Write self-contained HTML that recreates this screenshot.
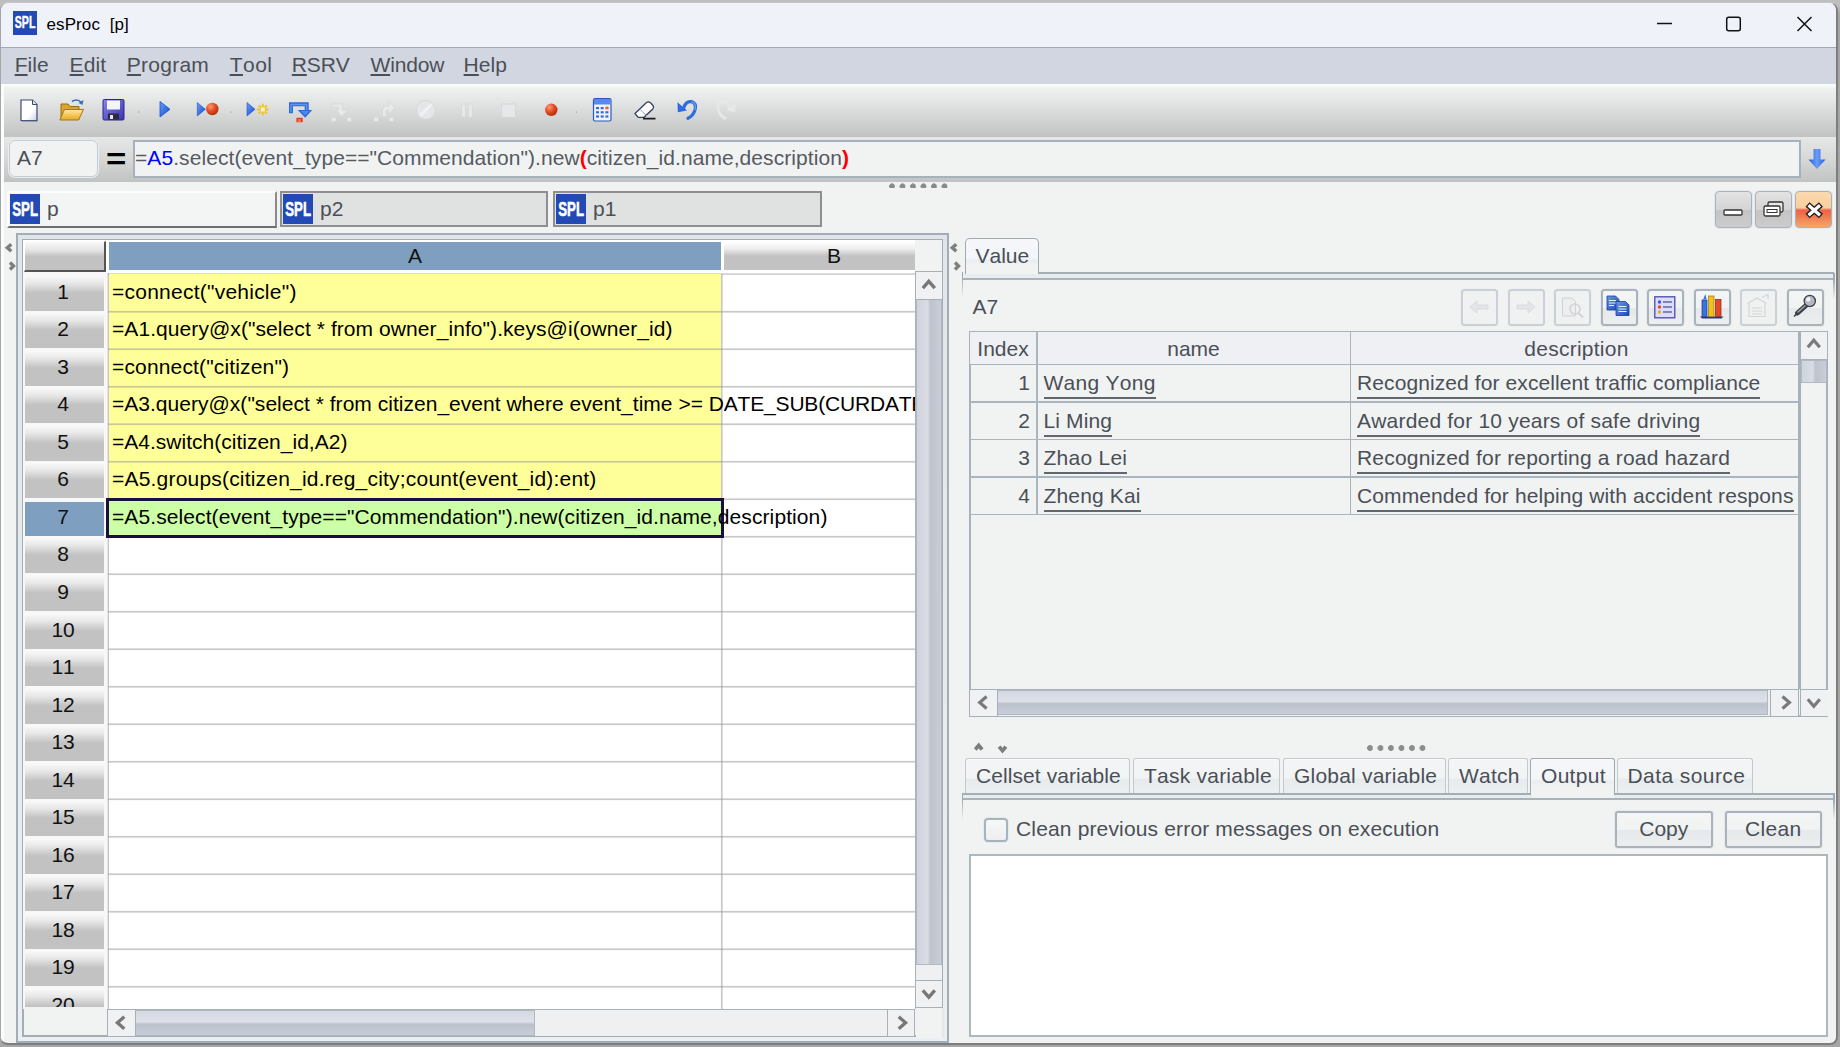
<!DOCTYPE html>
<html><head><meta charset="utf-8"><title>esProc [p]</title>
<style>
*{box-sizing:border-box;margin:0;padding:0}
html,body{width:1840px;height:1047px;overflow:hidden;background:#a9a9a9}
body{font-kerning:none;font-variant-ligatures:none;font-family:"Liberation Sans",sans-serif;font-size:21px;color:#4a4f57;position:relative}
.abs{position:absolute}
#desk{position:absolute;left:0;top:0;width:1840px;height:1047px;background:linear-gradient(#bebebe 0,#bebebe 6px,#a6a6a6 14px,#a6a6a6 100%)}
#win{position:absolute;left:0;top:2px;width:1838px;height:1043px;border-radius:9px 9px 8px 8px;background:#f1f3f2;border:1px solid #a6a6a6;border-top-color:#c4c6ca;border-right:2px solid #7e7e7e;border-bottom:2px solid #7e7e7e;overflow:hidden}
#win>*{position:absolute}
/* coordinates inside #win are offset by (1,3) from page => use #in wrapper */
#in{left:-1px;top:-3px;width:1840px;height:1047px}
#in>*{position:absolute}
#title{left:1px;top:3px;width:1836px;height:44px;background:#eff2f8}
#title .ico{position:absolute;left:12px;top:8px}
#title .txt{position:absolute;left:45.5px;top:12px;font-size:17px;color:#000;white-space:pre;letter-spacing:0.1px}
#menusep{left:1px;top:47px;width:1836px;height:1px;background:#a3a7b0}
#menu{left:1px;top:48px;width:1836px;height:36px;background:#d2d6e0}
#menu span{position:absolute;top:5px;font-size:21px;line-height:24px;color:#4b5058;white-space:pre}
#menu u{text-decoration:underline;text-decoration-thickness:1.5px;text-underline-offset:2px}
#tbwhite{left:1px;top:84px;width:1836px;height:2px;background:#fbfcfd}
#tb1{left:4px;top:85px;width:1832px;height:52px;background:linear-gradient(#fcfdfd 0%,#f1f3f2 5%,#c1c2c2 100%)}
#tb2{left:4px;top:137px;width:1832px;height:45px;background:linear-gradient(#e6e7e7 0%,#d6d7d7 50%,#c1c2c2 100%)}

.t{white-space:pre}
.dtab{background:#e0e1e1;border:2px solid #8f8f8f}
.dtab.sel{background:#f3f5f4;border:none;border-top:2px solid #fdfdfd;border-left:2px solid #fdfdfd;border-right:2px solid #8a8a8a;border-bottom:2px solid #6e6e6e}
.mdib{width:37px;height:37px;border:1.5px solid #aab2ba;border-radius:4px;background:linear-gradient(#e3e3e3,#d4d4d4 50%,#c4c4c4 51%,#cccccc);box-shadow:0 0 0 1px #e4e8ec}
.mdib.cl{background:linear-gradient(#fbd9ae 0%,#f9cf9e 45%,#f0604a 52%,#f07a50 70%,#f3a868 100%)}

#gp{border:2px solid #a2adb5;background:linear-gradient(#e1e5e9,#eceff1)}
#gpi{position:absolute;left:4px;top:4px;right:4px;bottom:4px;border:2px solid #a2adb5;background:#f1f3f2}
#gv>*{position:absolute}
.corner{background:linear-gradient(#f8f8f8 0%,#e4e4e4 30%,#c2c2c2 52%,#c2c2c2 100%);border-right:2px solid #555;border-bottom:2px solid #555;border-top:1px solid #fff;border-left:1px solid #fff}
.colA{background:#7f9fc0;text-align:center;color:#111;font-size:21px;line-height:28px}
.colB{background:linear-gradient(#ffffff 0%,#ececec 25%,#c2c2c2 50%,#c2c2c2 100%);text-align:center;color:#111;font-size:21px;line-height:28px}
.rhbg{background:#f8f8f8}
.rh{background:linear-gradient(#f6f6f6 0%,#e8e8e8 18%,#c2c2c2 47%,#c2c2c2 100%);text-align:center;color:#111;font-size:21px;line-height:30px;padding-right:3px}
.rh.sel{background:#7f9fc0}
.cy{background:#ffff99}
.cg{background:#ccffa6}
.hline{height:1.5px;background:#c6c6c6}
.vline{width:1.5px;background:#c6c6c6}
.csel{border:3.8px solid #1c0f3e}
.ct{color:#000;font-size:21px;line-height:24px;white-space:pre}
.sbv{background:#eef0f1;border-left:1px solid #a8b2ba}
.sbh{background:#eef0f1;border-top:1px solid #a8b2ba}
.sbthumbv{background:linear-gradient(90deg,#cfd3dc 0%,#d9dce4 45%,#bec3cd 55%,#c9cdd6 100%);border:1px solid #b0b8c4}
.sbthumbh{background:linear-gradient(#d4d8e1 0%,#dde0e7 45%,#bcc2cd 55%,#c8cdd7 100%);border:1px solid #b0b8c4}
.sbbtn{background:#eff1f2;border:1.5px solid #a6b0b9}
.sbgap{background:#f1f3f2}

.vtab{border:1.5px solid #9fabb3;border-bottom:none;border-radius:5px 5px 0 0;background:linear-gradient(#f6f7fb 0%,#f3f5f8 55%,#e9edf1 62%,#f1f3f2 75%,#f1f3f2 100%)}
.vbtn{width:37px;height:37px;border:2px solid #a9b3bb;border-radius:3.5px;background:linear-gradient(#f4f6f6 0%,#f1f3f3 50%,#e6e9eb 52%,#eceeef 100%);box-shadow:0 0 0 1px #e6eaed}
.vbtn.dis{border-color:#c9d0d6;background:#f0f2f2;box-shadow:0 0 0 1px #edf0f2}
#vt{border:2px solid #a8b2ba;background:#f1f3f2}
.thd{background:#eef0f4}
.tl{background:#abb5bd}
.th{text-align:center;font-size:21px;line-height:24px;white-space:pre}
.td{font-size:21px;line-height:24px;white-space:pre}
.td.r{text-align:right}
.ul{display:inline-block;border-bottom:2px solid #62676f;padding-bottom:2.4px;line-height:24px;height:28.4px}
.btab{border:1.5px solid #c2c9cf;border-bottom:none;border-radius:3px 3px 0 0;background:linear-gradient(#f4f5f6 0%,#f2f4f4 55%,#e8ebee 60%,#eceff0 100%);box-shadow:inset 0 1px 0 #fafbfb}
.btab.sel{border-color:#9fabb3;background:linear-gradient(#f6f7fa 0%,#f3f5f8 55%,#e9edf1 62%,#f1f3f2 75%,#f1f3f2 100%)}
.cb{width:24px;height:24px;border:2px solid #a9b3bb;border-radius:4px;background:linear-gradient(#f7f8f8,#eceeef);box-shadow:0 0 0 1px #e6eaed}
.pbtn{border:2px solid #a9b3bb;border-radius:3px;background:linear-gradient(#f4f6f6 0%,#f1f3f3 50%,#e6e9eb 52%,#eceeef 100%);box-shadow:0 0 0 1px #e6eaed;text-align:center;font-size:21px;line-height:32px}
#outbox{background:#fff;border:2px solid #adb7be}
</style></head><body>
<div id="desk"></div>
<div id="win"><div id="in">
<div id="title"><svg class="ico" width="24" height="24" viewBox="0 0 24 24"><rect width="24" height="24" fill="#2249b4"/><text x="12.1" y="17.4" font-family="Liberation Sans,sans-serif" font-weight="bold" font-size="16.5" fill="#fff" stroke="#fff" stroke-width="0.45" text-anchor="middle" textLength="20.6" lengthAdjust="spacingAndGlyphs">SPL</text></svg><span class="txt">esProc  [p]</span>
<svg class="wctl" style="position:absolute;left:1640px;top:0" width="196" height="44" viewBox="1641 3 196 44" fill="none" stroke="#111" stroke-width="1.5"><path d="M1657 23.500 H1672"/><rect x="1726.700" y="17.200" width="13.600" height="13.600" rx="2"/><path d="M1797.500 17 L1811.500 31 M1811.500 17 L1797.500 31"/></svg></div>
<div id="menusep"></div>
<div id="menu"><span id="m0" style="left:13.7px;letter-spacing:0.080px;"><u>F</u>ile</span><span id="m1" style="left:68.6px;letter-spacing:0.080px;"><u>E</u>dit</span><span id="m2" style="left:125.8px;letter-spacing:0.250px;"><u>P</u>rogram</span><span id="m3" style="left:228.7px;letter-spacing:0.500px;"><u>T</u>ool</span><span id="m4" style="left:290.8px;letter-spacing:-0.150px;"><u>R</u>SRV</span><span id="m5" style="left:369.5px;letter-spacing:-0.150px;"><u>W</u>indow</span><span id="m6" style="left:462.6px;letter-spacing:0.080px;"><u>H</u>elp</span></div>
<div id="tbwhite"></div>
<div id="tb1"></div>
<div id="tb2"></div>
<div style="left:1px;top:86px;width:3px;height:958px;background:#fbfcfc"></div>

<!-- toolbar icons -->
<svg id="tbicons" style="left:0;top:85px" width="800" height="52" viewBox="0 85 800 52">
<defs>
<linearGradient id="gBlue" x1="0" y1="0" x2="1" y2="1"><stop offset="0" stop-color="#6aa0ff"/><stop offset="1" stop-color="#1248c8"/></linearGradient>
<radialGradient id="gRed" cx="0.35" cy="0.3" r="0.8"><stop offset="0" stop-color="#ff9a70"/><stop offset="0.5" stop-color="#e04a22"/><stop offset="1" stop-color="#a82808"/></radialGradient>
<linearGradient id="gFold" x1="0" y1="0" x2="0" y2="1"><stop offset="0" stop-color="#ffe9a0"/><stop offset="1" stop-color="#e8a820"/></linearGradient>
<linearGradient id="gSave" x1="0" y1="0" x2="1" y2="1"><stop offset="0" stop-color="#8a86ee"/><stop offset="1" stop-color="#3a32b0"/></linearGradient>
<linearGradient id="gDoc" x1="0" y1="0" x2="1" y2="1"><stop offset="0" stop-color="#ffffff"/><stop offset="0.6" stop-color="#ffffff"/><stop offset="1" stop-color="#c8d0e4"/></linearGradient>
</defs>
<!-- new doc -->
<path d="M21 100 H32.5 L37 104.5 V120.5 H21 Z" fill="url(#gDoc)" stroke="#3c4a70" stroke-width="1.2"/>
<path d="M32.5 100 V104.5 H37" fill="#dfe4f0" stroke="#3c4a70" stroke-width="1"/>
<path d="M21.5 121.3 H37.5" stroke="#8890a8" stroke-width="1"/>
<!-- open folder -->
<path d="M61 104 H68 L70 106.5 H79 V119.5 H61 Z" fill="#d9a432" stroke="#9a6c10" stroke-width="1"/>
<path d="M64.5 109.5 H83.5 L78.5 120 H59.8 Z" fill="url(#gFold)" stroke="#a87818" stroke-width="1"/>
<path d="M72 101.5 Q77 98 81.5 102.5" fill="none" stroke="#3a6ac8" stroke-width="1.6"/>
<path d="M83.5 100 L82.5 105 L78.5 103 Z" fill="#3a6ac8"/>
<!-- save -->
<rect x="103" y="99.5" width="21" height="20.5" rx="1.2" fill="url(#gSave)" stroke="#2a2490" stroke-width="1"/>
<rect x="107" y="100.5" width="13" height="9" fill="#f4f4fa"/>
<rect x="108" y="113.5" width="11" height="6" fill="#2c2c38"/>
<rect x="110" y="115" width="3" height="4" fill="#e8e8f0"/>
<!-- sep -->
<rect x="138" y="111.5" width="1.2" height="1.2" fill="#a0a4a8"/>
<rect x="230.5" y="111.5" width="1.2" height="1.2" fill="#a0a4a8"/>
<rect x="575.8" y="111.5" width="1.2" height="1.2" fill="#a0a4a8"/>
<!-- run -->
<path d="M160 101.5 L170 109.3 L160 117 Z" fill="url(#gBlue)" stroke="#1a50c8" stroke-width="0.8"/>
<!-- debug -->
<path d="M197.3 102.5 L205.3 109.3 L197.3 116 Z" fill="url(#gBlue)" stroke="#1a50c8" stroke-width="0.6"/>
<circle cx="212.3" cy="109" r="6.2" fill="url(#gRed)"/>
<!-- run to cursor -->
<path d="M247 102.5 L255 109.3 L247 116 Z" fill="url(#gBlue)" stroke="#1a50c8" stroke-width="0.6"/>
<g stroke="#f0c020" stroke-width="1.8"><path d="M262.8 103.8 V115.2 M257 109.5 H268.5 M258.7 105.4 L266.9 113.6 M266.9 105.4 L258.7 113.6"/></g>
<rect x="260.8" y="107.5" width="4" height="4" fill="#fff8c0"/>
<!-- step over -->
<path d="M291 113.200 V104.300 H306.700 V110.500" fill="none" stroke="#2b6ad8" stroke-width="4"/>
<path d="M291 112.500 V104.500 H306.600 V110.500" fill="none" stroke="#5c98f2" stroke-width="1.4"/>
<path d="M297.800 110 H312.200 L305.200 117.800 Z" fill="#2b6ad8"/>
<path d="M301 111 H309.500 L305.200 115.500 Z" fill="#4a88ec"/>
<rect x="296.400" y="117.800" width="6.300" height="4.400" fill="#e63a1c"/>
<rect x="297.800" y="119" width="3.200" height="3.200" fill="#f87050"/>
<!-- disabled step into -->
<g fill="#e6e8e9" stroke="#d3d5d6" stroke-width="0.7"><path d="M331.500 104 H342.700 V110 H348 L342 116.500 L335.500 110 H338.500 V107.200 H331.500 Z"/><rect x="331.500" y="117.200" width="4.500" height="4.200"/><rect x="347" y="117.200" width="4.500" height="4.200"/></g>
<!-- disabled step out -->
<g fill="#e6e8e9" stroke="#d3d5d6" stroke-width="0.7"><path d="M382.500 116.500 V110 Q382.500 106 386.500 106 H388.500 V101.500 L395.500 107.800 L388.500 114 V109.800 H387 Q386.200 109.800 386.200 111 V116.500 Z"/><rect x="373.800" y="117.200" width="4.500" height="4.200"/><rect x="389.300" y="117.200" width="4.500" height="4.200"/></g>
<!-- disabled stop circle -->
<circle cx="425.800" cy="110" r="9.500" fill="#e4e6e7" stroke="#d3d5d6" stroke-width="0.9"/>
<path d="M421 115 L430.500 105" stroke="#f0f1f2" stroke-width="2.800" stroke-linecap="round"/>
<!-- pause -->
<g fill="#e6e8e9" stroke="#d3d5d6" stroke-width="0.7"><rect x="461.700" y="104" width="3.800" height="13"/><rect x="468.400" y="104" width="3.800" height="13"/></g>
<!-- stop -->
<rect x="501.700" y="104" width="13.800" height="13.300" fill="#e5e7e8" stroke="#d3d5d6" stroke-width="0.8"/>
<!-- red ball -->
<circle cx="551.3" cy="109.8" r="6.2" fill="url(#gRed)"/>
<!-- calculator -->
<rect x="593.5" y="98.5" width="17.5" height="22.5" rx="1.5" fill="#eef3fc" stroke="#2a58c0" stroke-width="1.2"/>
<rect x="594" y="99" width="16.5" height="5.5" fill="#5a8ae8"/>
<g fill="#3a6ad8"><rect x="596" y="107" width="3" height="2.2"/><rect x="600.7" y="107" width="3" height="2.2"/><rect x="596" y="111.2" width="3" height="2.2"/><rect x="600.7" y="111.2" width="3" height="2.2"/><rect x="605.4" y="111.2" width="3" height="2.2"/><rect x="596" y="115.4" width="3" height="2.2"/><rect x="600.7" y="115.4" width="3" height="2.2"/><rect x="605.4" y="115.4" width="3" height="2.2"/></g>
<rect x="605.4" y="106.6" width="3.2" height="2.8" fill="#f06030"/>
<!-- eraser -->
<path d="M635 113.5 L646.5 102.5 Q648.5 101 650.5 102.8 L653 105.5 Q654.3 107.3 652.8 109 L644 117.3 H638.2 Z" fill="url(#gDoc)" stroke="#32405c" stroke-width="1.3"/>
<path d="M640 109.5 L647 116" stroke="#8aa0d0" stroke-width="1"/>
<path d="M643 118.6 H655.5" stroke="#1a1a1a" stroke-width="1.6"/>
<!-- undo -->
<path d="M683.500 108.500 Q685.500 100.800 691.500 101.600 Q696.800 103.200 695 110 Q693 116 688 118.300" fill="none" stroke="#2f6be0" stroke-width="3.200" stroke-linecap="round"/>
<path d="M691.500 101.600 Q696.800 103.200 695 110" fill="none" stroke="#6aa0f4" stroke-width="1.200"/>
<path d="M677.500 102.300 L677.800 112.200 L687 110.600 Z" fill="#2f6be0"/>
<!-- redo disabled -->
<g><path d="M729.700 108.500 Q727.700 100.800 721.700 101.600 Q716.400 103.200 718.200 110 Q720.200 116 725.200 118.300" fill="none" stroke="#e5e7e8" stroke-width="3" stroke-linecap="round"/><path d="M735.700 102.300 L735.400 112.200 L726.200 110.600 Z" fill="#e5e7e8"/></g>
</svg>
<!-- formula bar -->
<div id="cellname" style="left:9px;top:140px;width:89px;height:37px;border:1.5px solid #c3cbd3;border-radius:6px;background:#f1f3f2;box-shadow:0 0 0 1px #e9edf1"></div>
<div class="t" style="left:17px;top:146px;font-size:21px;line-height:24px">A7</div>
<div id="eqs" style="left:106px;top:142px;font-size:29px;line-height:34px;font-weight:bold;color:#000;transform:scaleX(1.2);transform-origin:0 0">=</div>
<div id="fx" style="left:133px;top:140px;width:1668px;height:38px;border:2px solid #a7b1ba;background:#f1f3f2"></div>
<div class="t" id="fxt" style="left:135px;top:146px;font-size:21px;line-height:24px;white-space:pre;color:#555a62;letter-spacing:0.072px;">=<span style="color:#0000ff">A5</span>.select(event_type=="Commendation").new<span style="color:#ff0000;font-weight:bold">(</span>citizen_id.name,description<span style="color:#ff0000;font-weight:bold">)</span></div>
<svg style="left:1806px;top:147px" width="22" height="24" viewBox="0 0 22 24"><defs><linearGradient id="gArr" x1="0" y1="0" x2="1" y2="0"><stop offset="0" stop-color="#2a5ad8"/><stop offset="0.5" stop-color="#6a9cf8"/><stop offset="1" stop-color="#2a5ad8"/></linearGradient></defs><path d="M7.5 2 H14.5 V12.5 H19.5 L11 22 L2.5 12.5 H7.5 Z" fill="url(#gArr)"/></svg>

<!-- split dots top -->
<div id="dots1" style="left:889px;top:183.400px;width:59px;height:4.400px;background:radial-gradient(ellipse 3px 3.200px at 3px 3.300px,#8a8a8a 0 85%,transparent 100%);background-size:10.500px 7px;background-repeat:repeat-x"></div>
<!-- doc tabs -->
<div class="dtab sel" style="left:7px;top:191px;width:270px;height:37px"></div>
<div class="dtab" style="left:280px;top:191px;width:268px;height:36px"></div>
<div class="dtab" style="left:552.500px;top:191px;width:269.500px;height:36px"></div>
<svg class="spl" style="left:10px;top:194px" width="30" height="30" viewBox="0 0 24 24"><rect width="24" height="24" fill="#2249b4"/><text x="12.1" y="17.4" font-family="Liberation Sans,sans-serif" font-weight="bold" font-size="16.5" fill="#fff" stroke="#fff" stroke-width="0.45" text-anchor="middle" textLength="20.6" lengthAdjust="spacingAndGlyphs">SPL</text></svg>
<svg class="spl" style="left:283px;top:194px" width="30" height="30" viewBox="0 0 24 24"><rect width="24" height="24" fill="#2249b4"/><text x="12.1" y="17.4" font-family="Liberation Sans,sans-serif" font-weight="bold" font-size="16.5" fill="#fff" stroke="#fff" stroke-width="0.45" text-anchor="middle" textLength="20.6" lengthAdjust="spacingAndGlyphs">SPL</text></svg>
<svg class="spl" style="left:556px;top:194px" width="30" height="30" viewBox="0 0 24 24"><rect width="24" height="24" fill="#2249b4"/><text x="12.1" y="17.4" font-family="Liberation Sans,sans-serif" font-weight="bold" font-size="16.5" fill="#fff" stroke="#fff" stroke-width="0.45" text-anchor="middle" textLength="20.6" lengthAdjust="spacingAndGlyphs">SPL</text></svg>
<div class="t" style="left:47px;top:197px;font-size:21px;line-height:24px">p</div>
<div class="t" style="left:320px;top:197px;font-size:21px;line-height:24px">p2</div>
<div class="t" style="left:593px;top:197px;font-size:21px;line-height:24px">p1</div>
<!-- MDI buttons -->
<div class="mdib" style="left:1715px;top:191px"></div>
<div class="mdib" style="left:1755px;top:191px"></div>
<div class="mdib cl" style="left:1795px;top:191px"></div>
<svg style="left:1715px;top:191px" width="120" height="37" viewBox="0 0 120 37">
<rect x="9" y="19" width="18" height="5" rx="1" fill="#fff" stroke="#333" stroke-width="1.3"/>
<rect x="53" y="11" width="15" height="10" rx="1.5" fill="#e8e8e8" stroke="#333" stroke-width="1.3"/>
<rect x="49" y="15" width="16" height="10" rx="1.5" fill="#fff" stroke="#333" stroke-width="1.3"/>
<rect x="52" y="18.5" width="10" height="3" fill="none" stroke="#333" stroke-width="1"/>
<path d="M92.500 13.500 L106 25 M106 13.500 L92.500 25" stroke="#222" stroke-width="6.200" stroke-linecap="butt"/>
<path d="M93.500 14.300 L105 24.200 M105 14.300 L93.500 24.200" stroke="#fff" stroke-width="3.200" stroke-linecap="butt"/>
</svg>

<!-- grid panel -->
<div id="gp" style="left:16px;top:233px;width:933px;height:810px"><div id="gpi"></div></div>
<div id="gv" style="left:23px;top:240px;width:892px;height:769px;overflow:hidden;background:#fff">
<div class="rhbg" style="left:0px;top:31px;width:84px;height:740px"></div>
<div class="corner" style="left:0.5px;top:1px;width:82.5px;height:31px"></div>
<div class="colA" style="left:86px;top:2px;width:612px;height:28px"><span>A</span></div>
<div class="colB" style="left:700.5px;top:2px;width:221px;height:28px"><span>B</span></div>
<div style="left:85px;top:33px;width:808px;height:1px;background:rgba(150,150,150,0.325)"></div>
<div style="left:85px;top:34px;width:808px;height:1px;background:rgba(150,150,150,0.425)"></div>
<div style="left:84px;top:33px;width:1px;height:740px;background:rgba(140,140,140,0.240)"></div>
<div style="left:85px;top:33px;width:1px;height:740px;background:rgba(140,140,140,0.480)"></div>
<div class="rh" style="left:2px;top:36.5px;width:79.2px;height:34px"><span>1</span></div>
<div class="cy" style="left:85.8px;top:34px;width:612.2px;height:38px"></div>
<div class="rh" style="left:2px;top:74.1px;width:79.2px;height:34px"><span>2</span></div>
<div class="cy" style="left:85.8px;top:71.5px;width:612.2px;height:38px"></div>
<div class="rh" style="left:2px;top:111.6px;width:79.2px;height:34px"><span>3</span></div>
<div class="cy" style="left:85.8px;top:109px;width:612.2px;height:38px"></div>
<div class="rh" style="left:2px;top:149.1px;width:79.2px;height:34px"><span>4</span></div>
<div class="cy" style="left:85.8px;top:146.5px;width:612.2px;height:38px"></div>
<div class="rh" style="left:2px;top:186.7px;width:79.2px;height:34px"><span>5</span></div>
<div class="cy" style="left:85.8px;top:184px;width:612.2px;height:38px"></div>
<div class="rh" style="left:2px;top:224.2px;width:79.2px;height:34px"><span>6</span></div>
<div class="cy" style="left:85.8px;top:221.5px;width:612.2px;height:38px"></div>
<div class="rh sel" style="left:2px;top:261.8px;width:79.2px;height:34px"><span>7</span></div>
<div class="rh" style="left:2px;top:299.3px;width:79.2px;height:34px"><span>8</span></div>
<div class="rh" style="left:2px;top:336.9px;width:79.2px;height:34px"><span>9</span></div>
<div class="rh" style="left:2px;top:374.5px;width:79.2px;height:34px"><span>10</span></div>
<div class="rh" style="left:2px;top:412px;width:79.2px;height:34px"><span>11</span></div>
<div class="rh" style="left:2px;top:449.5px;width:79.2px;height:34px"><span>12</span></div>
<div class="rh" style="left:2px;top:487.1px;width:79.2px;height:34px"><span>13</span></div>
<div class="rh" style="left:2px;top:524.6px;width:79.2px;height:34px"><span>14</span></div>
<div class="rh" style="left:2px;top:562.2px;width:79.2px;height:34px"><span>15</span></div>
<div class="rh" style="left:2px;top:599.8px;width:79.2px;height:34px"><span>16</span></div>
<div class="rh" style="left:2px;top:637.3px;width:79.2px;height:34px"><span>17</span></div>
<div class="rh" style="left:2px;top:674.8px;width:79.2px;height:34px"><span>18</span></div>
<div class="rh" style="left:2px;top:712.4px;width:79.2px;height:34px"><span>19</span></div>
<div class="rh" style="left:2px;top:749.9px;width:79.2px;height:34px"><span>20</span></div>
<div class="cg" style="left:85.8px;top:259px;width:612.2px;height:38px"></div>
<div style="left:85px;top:70px;width:808px;height:1px;background:rgba(150,150,150,0.052)"></div>
<div style="left:85px;top:71px;width:808px;height:1px;background:rgba(150,150,150,0.520)"></div>
<div style="left:85px;top:72px;width:808px;height:1px;background:rgba(150,150,150,0.312)"></div>
<div style="left:85px;top:108px;width:808px;height:1px;background:rgba(150,150,150,0.312)"></div>
<div style="left:85px;top:109px;width:808px;height:1px;background:rgba(150,150,150,0.520)"></div>
<div style="left:85px;top:110px;width:808px;height:1px;background:rgba(150,150,150,0.052)"></div>
<div style="left:85px;top:145px;width:808px;height:1px;background:rgba(150,150,150,0.052)"></div>
<div style="left:85px;top:146px;width:808px;height:1px;background:rgba(150,150,150,0.520)"></div>
<div style="left:85px;top:147px;width:808px;height:1px;background:rgba(150,150,150,0.312)"></div>
<div style="left:85px;top:183px;width:808px;height:1px;background:rgba(150,150,150,0.312)"></div>
<div style="left:85px;top:184px;width:808px;height:1px;background:rgba(150,150,150,0.520)"></div>
<div style="left:85px;top:185px;width:808px;height:1px;background:rgba(150,150,150,0.052)"></div>
<div style="left:85px;top:220px;width:808px;height:1px;background:rgba(150,150,150,0.052)"></div>
<div style="left:85px;top:221px;width:808px;height:1px;background:rgba(150,150,150,0.520)"></div>
<div style="left:85px;top:222px;width:808px;height:1px;background:rgba(150,150,150,0.312)"></div>
<div style="left:85px;top:258px;width:808px;height:1px;background:rgba(150,150,150,0.312)"></div>
<div style="left:85px;top:259px;width:808px;height:1px;background:rgba(150,150,150,0.520)"></div>
<div style="left:85px;top:260px;width:808px;height:1px;background:rgba(150,150,150,0.052)"></div>
<div style="left:85px;top:295px;width:808px;height:1px;background:rgba(150,150,150,0.052)"></div>
<div style="left:85px;top:296px;width:808px;height:1px;background:rgba(150,150,150,0.520)"></div>
<div style="left:85px;top:297px;width:808px;height:1px;background:rgba(150,150,150,0.312)"></div>
<div style="left:85px;top:333px;width:808px;height:1px;background:rgba(150,150,150,0.312)"></div>
<div style="left:85px;top:334px;width:808px;height:1px;background:rgba(150,150,150,0.520)"></div>
<div style="left:85px;top:335px;width:808px;height:1px;background:rgba(150,150,150,0.052)"></div>
<div style="left:85px;top:370px;width:808px;height:1px;background:rgba(150,150,150,0.052)"></div>
<div style="left:85px;top:371px;width:808px;height:1px;background:rgba(150,150,150,0.520)"></div>
<div style="left:85px;top:372px;width:808px;height:1px;background:rgba(150,150,150,0.312)"></div>
<div style="left:85px;top:408px;width:808px;height:1px;background:rgba(150,150,150,0.312)"></div>
<div style="left:85px;top:409px;width:808px;height:1px;background:rgba(150,150,150,0.520)"></div>
<div style="left:85px;top:410px;width:808px;height:1px;background:rgba(150,150,150,0.052)"></div>
<div style="left:85px;top:445px;width:808px;height:1px;background:rgba(150,150,150,0.052)"></div>
<div style="left:85px;top:446px;width:808px;height:1px;background:rgba(150,150,150,0.520)"></div>
<div style="left:85px;top:447px;width:808px;height:1px;background:rgba(150,150,150,0.312)"></div>
<div style="left:85px;top:483px;width:808px;height:1px;background:rgba(150,150,150,0.312)"></div>
<div style="left:85px;top:484px;width:808px;height:1px;background:rgba(150,150,150,0.520)"></div>
<div style="left:85px;top:485px;width:808px;height:1px;background:rgba(150,150,150,0.052)"></div>
<div style="left:85px;top:520px;width:808px;height:1px;background:rgba(150,150,150,0.052)"></div>
<div style="left:85px;top:521px;width:808px;height:1px;background:rgba(150,150,150,0.520)"></div>
<div style="left:85px;top:522px;width:808px;height:1px;background:rgba(150,150,150,0.312)"></div>
<div style="left:85px;top:558px;width:808px;height:1px;background:rgba(150,150,150,0.312)"></div>
<div style="left:85px;top:559px;width:808px;height:1px;background:rgba(150,150,150,0.520)"></div>
<div style="left:85px;top:560px;width:808px;height:1px;background:rgba(150,150,150,0.052)"></div>
<div style="left:85px;top:595px;width:808px;height:1px;background:rgba(150,150,150,0.052)"></div>
<div style="left:85px;top:596px;width:808px;height:1px;background:rgba(150,150,150,0.520)"></div>
<div style="left:85px;top:597px;width:808px;height:1px;background:rgba(150,150,150,0.312)"></div>
<div style="left:85px;top:633px;width:808px;height:1px;background:rgba(150,150,150,0.312)"></div>
<div style="left:85px;top:634px;width:808px;height:1px;background:rgba(150,150,150,0.520)"></div>
<div style="left:85px;top:635px;width:808px;height:1px;background:rgba(150,150,150,0.052)"></div>
<div style="left:85px;top:670px;width:808px;height:1px;background:rgba(150,150,150,0.052)"></div>
<div style="left:85px;top:671px;width:808px;height:1px;background:rgba(150,150,150,0.520)"></div>
<div style="left:85px;top:672px;width:808px;height:1px;background:rgba(150,150,150,0.312)"></div>
<div style="left:85px;top:708px;width:808px;height:1px;background:rgba(150,150,150,0.312)"></div>
<div style="left:85px;top:709px;width:808px;height:1px;background:rgba(150,150,150,0.520)"></div>
<div style="left:85px;top:710px;width:808px;height:1px;background:rgba(150,150,150,0.052)"></div>
<div style="left:85px;top:745px;width:808px;height:1px;background:rgba(150,150,150,0.052)"></div>
<div style="left:85px;top:746px;width:808px;height:1px;background:rgba(150,150,150,0.520)"></div>
<div style="left:85px;top:747px;width:808px;height:1px;background:rgba(150,150,150,0.312)"></div>
<div style="left:85px;top:783px;width:808px;height:1px;background:rgba(150,150,150,0.312)"></div>
<div style="left:85px;top:784px;width:808px;height:1px;background:rgba(150,150,150,0.520)"></div>
<div style="left:85px;top:785px;width:808px;height:1px;background:rgba(150,150,150,0.052)"></div>
<div style="left:697px;top:34px;width:1px;height:740px;background:rgba(150,150,150,0.026)"></div>
<div style="left:698px;top:34px;width:1px;height:740px;background:rgba(150,150,150,0.520)"></div>
<div style="left:699px;top:34px;width:1px;height:740px;background:rgba(150,150,150,0.338)"></div>
<div class="csel" style="left:83.2px;top:257.6px;width:618px;height:40.8px"></div>
<div class="ct" id="r1" style="left:89px;top:39.6px;letter-spacing:0.239px;">=connect("vehicle")</div>
<div class="ct" id="r2" style="left:89px;top:77.1px;letter-spacing:0.073px;">=A1.query@x("select * from owner_info").keys@i(owner_id)</div>
<div class="ct" id="r3" style="left:89px;top:114.6px;letter-spacing:0.154px;">=connect("citizen")</div>
<div class="ct" id="r4" style="left:89px;top:152.1px;letter-spacing:0.022px;">=A3.query@x("select * from citizen_event where event_time &gt;= <span style="letter-spacing:-0.19px">DATE_SUB(CURDATE(),INTERVAL 1 YEAR)")</span></div>
<div class="ct" id="r5" style="left:89px;top:189.6px;letter-spacing:0.009px;">=A4.switch(citizen_id,A2)</div>
<div class="ct" id="r6" style="left:89px;top:227.1px;letter-spacing:0.196px;">=A5.groups(citizen_id.reg_city;count(event_id):ent)</div>
<div class="ct" id="r7" style="left:89px;top:264.6px;letter-spacing:0.093px;">=A5.select(event_type=="Commendation").new(citizen_id.name,description)</div>
</div>
<div style="left:23.5px;top:1006.7px;width:81.5px;height:3px;background:#f1f3f2"></div>
<div class="sbgap" style="left:915px;top:240px;width:27px;height:31px"></div>
<div class="sbv" style="left:914.5px;top:271px;width:27.5px;height:738px"></div>
<div class="sbthumbv" style="left:916px;top:299px;width:26px;height:665.5px"></div>
<div class="sbbtn" style="left:914.5px;top:271px;width:28px;height:28.5px"></div>
<div class="sbbtn" style="left:914.5px;top:979.5px;width:28px;height:28.5px"></div>
<div class="sbcorner" style="left:23px;top:1009px;width:84px;height:27px"></div>
<div class="sbcorner" style="left:916px;top:1008px;width:28px;height:30px;background:linear-gradient(90deg,#f1f3f2 0,#f1f3f2 25px,#dfe3e7 28px)"></div>
<div class="sbh" style="left:106.5px;top:1008.5px;width:808.5px;height:27.5px"></div>
<div class="sbthumbh" style="left:135px;top:1010px;width:399.5px;height:26px"></div>
<div class="sbbtn" style="left:106.5px;top:1008.5px;width:29px;height:28px"></div>
<div class="sbbtn" style="left:886.5px;top:1008.5px;width:28.5px;height:28px"></div>
<svg style="left:0;top:0;pointer-events:none" width="962" height="1047" viewBox="0 0 962 1047" fill="none" stroke="#787878" stroke-width="3.3" stroke-linejoin="miter">
<path d="M922.800 288.200 L928.800 281.300 L934.800 288.200"/>
<path d="M922.800 990.300 L928.800 997.200 L934.800 990.300"/>
<path d="M124.300 1016.800 L117.400 1022.800 L124.300 1028.800"/>
<path d="M898.700 1016.800 L905.600 1022.800 L898.700 1028.800"/>
<g stroke="#7e7e7e" stroke-width="3.4" stroke-linejoin="miter"><path d="M11.300 244.300 L7.300 247.800 L11.300 251.300"/><path d="M10 262.500 L13.500 266 L10 269.500"/>
<path d="M956.300 244.300 L952.300 247.800 L956.300 251.300"/><path d="M955 262.500 L958.500 266 L955 269.500"/></g>
</svg>
<!-- right: Value tabbed pane -->
<div style="left:1037px;top:272px;width:797px;height:2px;background:#a3aeb6"></div>
<div style="left:962px;top:274px;width:872px;height:4px;background:#e9ecee"></div>
<div style="left:962px;top:278px;width:872px;height:2px;background:#a9b3bb"></div>
<div style="left:961.5px;top:272px;width:1.5px;height:26px;background:linear-gradient(#9fabb3,#9fabb3 25%,rgba(159,171,179,0))"></div>
<div style="left:1833px;top:273px;width:1.5px;height:26px;background:linear-gradient(#9fabb3,#9fabb3 25%,rgba(159,171,179,0))"></div>
<div class="vtab" style="left:964.5px;top:238px;width:74px;height:36px"></div>
<div class="t" style="left:975.5px;top:243.5px;font-size:21px;line-height:24px">Value</div>
<div class="t" style="left:972.5px;top:294.5px;font-size:21px;line-height:24px">A7</div>
<div class="vbtn dis" style="left:1461px;top:288.5px"></div>
<div class="vbtn dis" style="left:1507.5px;top:288.5px"></div>
<div class="vbtn dis" style="left:1554px;top:288.5px"></div>
<div class="vbtn" style="left:1600.5px;top:288.5px"></div>
<div class="vbtn" style="left:1647px;top:288.5px"></div>
<div class="vbtn" style="left:1693.5px;top:288.5px"></div>
<div class="vbtn dis" style="left:1740px;top:288.5px"></div>
<div class="vbtn" style="left:1786.5px;top:288.5px"></div>
<svg style="left:1455px;top:285px" width="380" height="44" viewBox="1455 285 380 44">
  <g fill="#e3e5e7" stroke="#d4d7da" stroke-width="0.8"><path d="M1470 307 L1477 301 V305 H1488 V309 H1477 V313 Z"/><path d="M1535 307 L1528 301 V305 H1517 V309 H1528 V313 Z"/></g>
  <g fill="#eceeef" stroke="#d0d3d6" stroke-width="1"><path d="M1562.5 298 H1572 L1575.5 301.500 V316 H1562.5 Z"/><circle cx="1575" cy="309" r="5" fill="none" stroke-width="1.6"/><path d="M1578.500 313 L1583 317.500" stroke-width="2"/></g>
  <g><defs><linearGradient id="gDocB" x1="0" y1="0" x2="1" y2="1"><stop offset="0" stop-color="#6a9af0"/><stop offset="1" stop-color="#1c44b0"/></linearGradient></defs><path d="M1607 296 H1615.500 L1619 299.500 V310 H1607 Z" fill="url(#gDocB)" stroke="#1c3c98" stroke-width="0.8"/><path d="M1609 300.500 H1616 M1609 303 H1616 M1609 305.500 H1614" stroke="#e8f0ff" stroke-width="1"/><path d="M1616 301.500 H1625.500 L1629 305 V315.500 H1616 Z" fill="url(#gDocB)" stroke="#1c3c98" stroke-width="0.8"/><path d="M1618.500 306.500 H1626.500 M1618.500 309 H1626.500 M1618.500 311.500 H1626.500" stroke="#e8f0ff" stroke-width="1.1"/></g>
<g><rect x="1654.800" y="296.800" width="20" height="21" fill="#dcdcfb" stroke="#4a4aa8" stroke-width="1.3"/><circle cx="1659.500" cy="302" r="1.700" fill="#3a5ae0"/><circle cx="1659.500" cy="307" r="1.700" fill="#e04a2a"/><circle cx="1659.500" cy="312" r="1.700" fill="#e8b020"/><path d="M1663 302 H1672 M1663 307 H1672 M1663 312 H1672" stroke="#6068a8" stroke-width="1.4"/></g>
  <g><path d="M1700 316.500 L1723.500 316.500 L1721.500 318.500 H1702 Z" fill="#2a3a70"/><rect x="1702" y="300" width="5" height="16.500" fill="#3a72e0" stroke="#1a3a90" stroke-width="0.7"/><rect x="1708.500" y="296" width="5.500" height="20.500" fill="#f0c020" stroke="#a07808" stroke-width="0.7"/><rect x="1715.500" y="299.500" width="5.500" height="17" fill="#e04a28" stroke="#902010" stroke-width="0.7"/><path d="M1703 299.500 L1705.500 294 L1706.500 299.500" fill="#3a72e0"/></g>
  <g fill="none" stroke="#d2d5d8" stroke-width="1.200"><path d="M1747.500 303.500 L1757 298 L1766.500 303.500 M1749 303.500 V316.500 H1765 V303.500"/><path d="M1752 308 H1762 M1752 311 H1762 M1752 314 H1762"/><path d="M1762 297.500 L1768 294.500 V299"/></g>
  <g><path d="M1806 305.500 L1797.500 313" stroke="#3c4048" stroke-width="5" stroke-linecap="round"/><path d="M1806 305 L1798 312" stroke="#9ea2aa" stroke-width="1.6" stroke-linecap="round"/><path d="M1797 313.500 L1794.500 316" stroke="#3c4048" stroke-width="1.6" stroke-linecap="round"/><circle cx="1809.800" cy="301" r="5.600" fill="#b4b8c0" stroke="#3c4048" stroke-width="1.3"/><circle cx="1808.300" cy="299.300" r="2.200" fill="#f2f2f4"/></g>
</svg>
<div id="vt" style="left:968.5px;top:330.5px;width:859px;height:386px"></div>
<div class="thd" style="left:970px;top:332px;width:828.5px;height:31.5px"></div>
<div class="tl" style="left:970px;top:363.5px;width:829px;height:1.5px"></div>
<div class="tl" style="left:970px;top:401px;width:829px;height:1.5px"></div>
<div class="tl" style="left:970px;top:438.5px;width:829px;height:1.5px"></div>
<div class="tl" style="left:970px;top:476px;width:829px;height:1.5px"></div>
<div class="tl" style="left:970px;top:513.5px;width:829px;height:1.5px"></div>
<div class="tl" style="left:1036px;top:332px;width:1.5px;height:183px"></div>
<div class="tl" style="left:1349.5px;top:332px;width:1.5px;height:183px"></div>
<div class="tl" style="left:1798px;top:332px;width:3px;height:357px;background:#a7b1b9"></div>
<div class="th" style="left:970px;top:336.5px;width:66px">Index</div>
<div class="th" style="left:1037.5px;top:336.5px;width:312px">name</div>
<div class="th" style="left:1351px;top:336.5px;width:448px;padding-left:3px;letter-spacing:0.25px">description</div>
<div class="td r" style="left:970px;top:371.0px;width:60px">1</div>
<div class="td" id="n1" style="left:1043.5px;top:371.0px;letter-spacing:0.272px;"><span class="ul">Wang Yong</span></div>
<div class="td" id="d1" style="left:1357px;top:371.0px;width:437.4px;overflow:hidden;letter-spacing:0.095px;"><span class="ul">Recognized for excellent traffic compliance</span></div>
<div class="td r" style="left:970px;top:408.5px;width:60px">2</div>
<div class="td" id="n2" style="left:1043.5px;top:408.5px;letter-spacing:0.142px;"><span class="ul">Li Ming</span></div>
<div class="td" id="d2" style="left:1357px;top:408.5px;width:437.4px;overflow:hidden;letter-spacing:0.198px;"><span class="ul">Awarded for 10 years of safe driving</span></div>
<div class="td r" style="left:970px;top:446.0px;width:60px">3</div>
<div class="td" id="n3" style="left:1043.5px;top:446.0px;letter-spacing:0.258px;"><span class="ul">Zhao Lei</span></div>
<div class="td" id="d3" style="left:1357px;top:446.0px;width:437.4px;overflow:hidden;letter-spacing:0.203px;"><span class="ul">Recognized for reporting a road hazard</span></div>
<div class="td r" style="left:970px;top:483.5px;width:60px">4</div>
<div class="td" id="n4" style="left:1043.5px;top:483.5px;letter-spacing:0.152px;"><span class="ul">Zheng Kai</span></div>
<div class="td" id="d4" style="left:1357px;top:483.5px;width:437.4px;overflow:hidden;letter-spacing:0.107px;"><span class="ul">Commended for helping with accident response</span></div>
<div class="sbh" style="left:970px;top:688.5px;width:828.5px;height:27.5px"></div>
<div class="sbthumbh" style="left:997px;top:690px;width:771px;height:25px"></div>
<div class="sbbtn" style="left:969px;top:688.5px;width:28.5px;height:28px"></div>
<div class="sbbtn" style="left:1770px;top:688.5px;width:28.5px;height:28px"></div>
<div class="sbbtn" style="left:1799.5px;top:332px;width:27px;height:28px;border-top:none;border-right:none"></div>
<div class="sbthumbv" style="left:1801px;top:360px;width:26px;height:23px"></div>
<div class="sbbtn" style="left:1799.5px;top:688.5px;width:28px;height:28px;border-right:none"></div>
<svg style="left:960px;top:320px;pointer-events:none" width="880" height="440" viewBox="960 320 880 440" fill="none" stroke="#7a7a7a" stroke-width="3.2">
  <path d="M1807.800 347.200 L1813.800 340.300 L1819.800 347.200"/>
  <path d="M1807.800 699.300 L1813.800 706.200 L1819.800 699.300"/>
  <path d="M986.600 696.500 L979.700 702.500 L986.600 708.500"/>
  <path d="M1782.500 696.500 L1789.400 702.500 L1782.500 708.500"/>
  <g stroke="#7c7c7c" stroke-width="3.700"><path d="M975.300 749.500 L978.700 745.400 L982.100 749.500"/><path d="M999.100 746.600 L1002.500 750.700 L1005.900 746.600"/></g>
  </svg>
<div id="dots2" style="left:1367px;top:744.5px;width:62px;height:6px;background:radial-gradient(circle at 3px 3px,#8c8c8c 0 2.6px,transparent 3.2px);background-size:10.5px 6px"></div>
<div class="btab" style="left:964.5px;top:757.6px;width:165.5px;height:35.4px"></div>
<div class="t" id="bt0" style="left:976px;top:764px;font-size:21px;line-height:24px;letter-spacing:0.080px;">Cellset variable</div>
<div class="btab" style="left:1132.5px;top:757.6px;width:147.5px;height:35.4px"></div>
<div class="t" id="bt1" style="left:1144px;top:764px;font-size:21px;line-height:24px;letter-spacing:0.230px;">Task variable</div>
<div class="btab" style="left:1282.5px;top:757.6px;width:163px;height:35.4px"></div>
<div class="t" id="bt2" style="left:1294px;top:764px;font-size:21px;line-height:24px;letter-spacing:0.210px;">Global variable</div>
<div class="btab" style="left:1447.5px;top:757.6px;width:80.5px;height:35.4px"></div>
<div class="t" id="bt3" style="left:1459px;top:764px;font-size:21px;line-height:24px;letter-spacing:0.200px;">Watch</div>
<div class="btab sel" style="left:1530px;top:757.6px;width:85px;height:37.4px"></div>
<div class="t" id="bt4" style="left:1541px;top:764px;font-size:21px;line-height:24px;letter-spacing:0.300px;">Output</div>
<div class="btab" style="left:1617px;top:757.6px;width:136px;height:35.4px"></div>
<div class="t" id="bt5" style="left:1627.5px;top:764px;font-size:21px;line-height:24px;letter-spacing:0.420px;">Data source</div>
<div style="left:962px;top:792.6px;width:568px;height:2px;background:#a3aeb6"></div>
<div style="left:1614.5px;top:792.6px;width:220px;height:2px;background:#a3aeb6"></div>
<div style="left:962px;top:795px;width:872px;height:3.500px;background:#e9ecee"></div>
<div style="left:1531.5px;top:793px;width:82px;height:5.5px;background:#f1f3f2"></div>
<div style="left:962px;top:798px;width:872px;height:2px;background:#a9b3bb"></div>
<div style="left:961.5px;top:794px;width:1.5px;height:26px;background:linear-gradient(#9fabb3,#9fabb3 25%,rgba(159,171,179,0))"></div>
<div style="left:1833px;top:794px;width:1.5px;height:26px;background:linear-gradient(#9fabb3,#9fabb3 25%,rgba(159,171,179,0))"></div>
<div class="cb" style="left:983.5px;top:818px"></div>
<div class="t" id="cpe" style="left:1016px;top:816.5px;font-size:21px;line-height:24px;letter-spacing:0.156px;">Clean previous error messages on execution</div>
<div class="pbtn" style="left:1615px;top:810.5px;width:97.5px;height:37px">Copy</div>
<div class="pbtn" style="left:1724.5px;top:810.5px;width:97.5px;height:37px;letter-spacing:0.3px">Clean</div>
<div id="outbox" style="left:968.5px;top:853.6px;width:859px;height:183.4px"></div>
</div></div>
</body></html>
